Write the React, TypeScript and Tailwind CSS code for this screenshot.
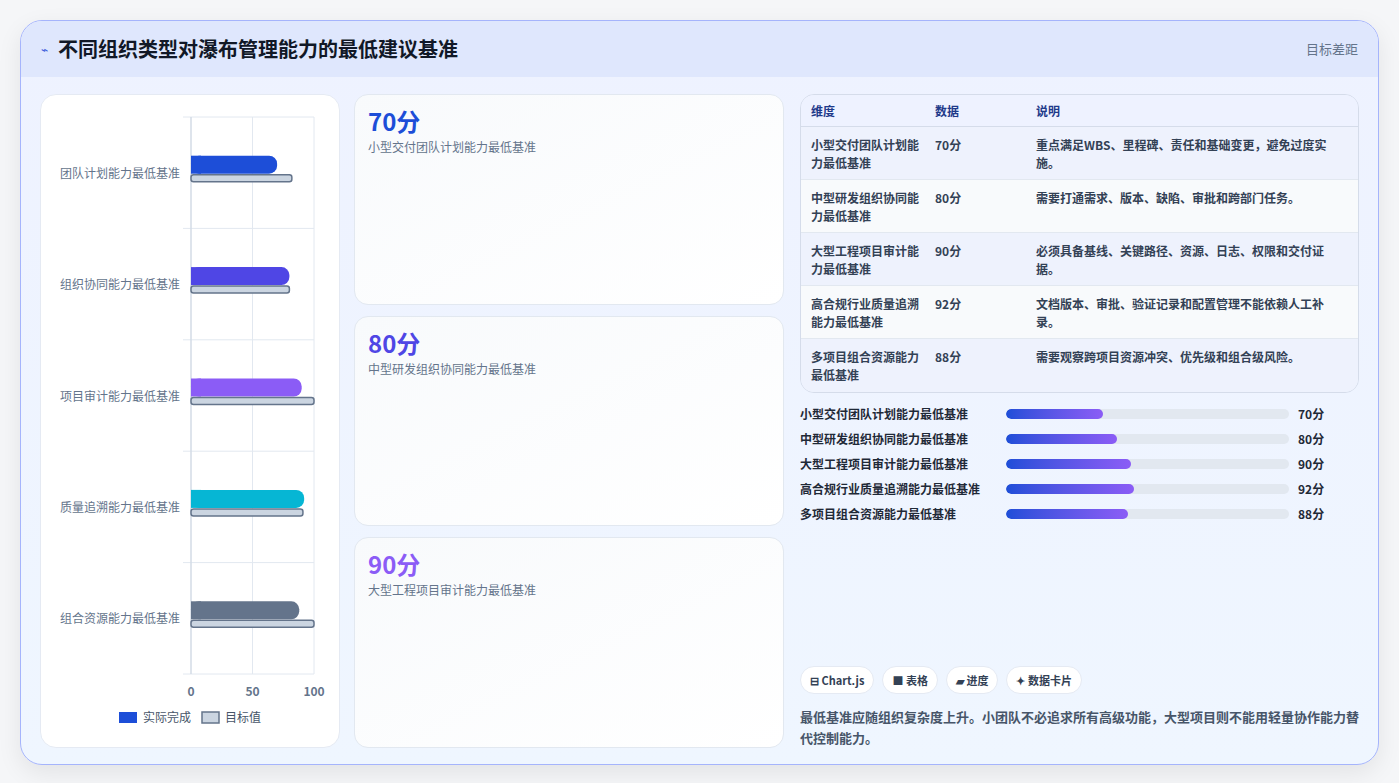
import React from "react";

const rows = [
  { name: "小型交付团队计划能力最低基准", short: "团队计划能力最低基准", v: 70, t: 82, c: "#1d4ed8", d: "重点满足WBS、里程碑、责任和基础变更，避免过度实施。" },
  { name: "中型研发组织协同能力最低基准", short: "组织协同能力最低基准", v: 80, t: 80, c: "#4f46e5", d: "需要打通需求、版本、缺陷、审批和跨部门任务。" },
  { name: "大型工程项目审计能力最低基准", short: "项目审计能力最低基准", v: 90, t: 100, c: "#8b5cf6", d: "必须具备基线、关键路径、资源、日志、权限和交付证据。" },
  { name: "高合规行业质量追溯能力最低基准", short: "质量追溯能力最低基准", v: 92, t: 91, c: "#06b6d4", d: "文档版本、审批、验证记录和配置管理不能依赖人工补录。" },
  { name: "多项目组合资源能力最低基准", short: "组合资源能力最低基准", v: 88, t: 100, c: "#64748b", d: "需要观察跨项目资源冲突、优先级和组合级风险。" },
];

const font = { fontFamily: '"Noto Sans CJK SC", "Noto Sans", sans-serif' };

function Chart() {
  const x0 = 150, w = 123, top = 22, rowH = 111.4;
  return (
    <svg width="299" height="652" className="block">
      {[0, 50, 100].map((t) => (
        <line key={t} x1={x0 + (w * t) / 100} x2={x0 + (w * t) / 100} y1={top} y2={top + rowH * 5} stroke="#e2e8f0" />
      ))}
      {[0, 1, 2, 3, 4, 5].map((i) => (
        <line key={i} x1={x0 - 8} x2={x0 + w} y1={top + rowH * i} y2={top + rowH * i} stroke="#e2e8f0" />
      ))}
      <line x1={x0} x2={x0} y1={top} y2={top + rowH * 5} stroke="#cbd5e1" />
      {rows.map((r, i) => {
        const cy = top + rowH * i + rowH / 2;
        return (
          <g key={i}>
            <text x={x0 - 11} y={cy + 5} textAnchor="end" fontSize="12" fill="#64748b" style={font}>{r.short}</text>
            <rect x={x0} y={cy - 17} width={(w * r.v) / 100} height={18} rx={8} fill={r.c} />
            <rect x={x0} y={cy - 17} width={10} height={18} fill={r.c} />
            <rect x={x0} y={cy + 2} width={(w * r.t) / 100} height={7} rx={2.5} fill="#cbd5e1" stroke="#64748b" strokeWidth="1.5" />
          </g>
        );
      })}
      {[0, 50, 100].map((t) => (
        <text key={t} x={x0 + (w * t) / 100} y={top + rowH * 5 + 22} textAnchor="middle" fontSize="12" fontWeight="700" fill="#64748b" style={font}>{t}</text>
      ))}
      <rect x="78" y="617" width="18" height="11" fill="#1d4ed8" />
      <text x="102" y="627" fontSize="12" fill="#475569" style={font}>实际完成</text>
      <rect x="161" y="617" width="17" height="11" fill="#cbd5e1" stroke="#64748b" strokeWidth="1.5" />
      <text x="184" y="627" fontSize="12" fill="#475569" style={font}>目标值</text>
    </svg>
  );
}

export default function App() {
  return (
    <div className="w-[1399px] h-[783px] bg-[#f5f6f8] p-[20px] pb-[18px]" style={font}>
      <div className="h-full rounded-[22px] border border-[#a5b4fc] bg-gradient-to-b from-[#eef2ff] to-[#eff6ff] overflow-hidden shadow-[0_8px_24px_rgba(0,0,0,0.08)] flex flex-col">
        <div className="h-[56px] shrink-0 bg-[#dfe7fd] flex items-center justify-between px-[20px]">
          <div className="flex items-center gap-[10px]">
            <span className="text-[#3b5bdb] text-[12px]">⌁</span>
            <h1 className="text-[20px] font-bold text-[#111827]">不同组织类型对瀑布管理能力的最低建议基准</h1>
          </div>
          <span className="text-[13px] text-[#64748b]">目标差距</span>
        </div>
        <div className="flex-1 flex gap-[14px] px-[19px] pt-[17px] pb-[19px]">
          <div className="w-[300px] shrink-0 bg-white rounded-[16px] border border-[#e5eaf3] overflow-hidden">
            <Chart />
          </div>
          <div className="w-[430px] shrink-0 flex flex-col gap-[11px]">
            {rows.slice(0, 3).map((r, i) => (
              <div key={i} className="flex-1 rounded-[14px] border border-[#e2e8f0] bg-gradient-to-br from-[#f8fafc] to-white px-[13px] pt-[10px]">
                <div className="text-[24px] font-bold leading-[32px]" style={{ color: r.c }}>{r.v}分</div>
                <div className="text-[12px] text-[#64748b] mt-[1px]">{r.name}</div>
              </div>
            ))}
          </div>
          <div className="flex-1 flex flex-col pl-[2px] pr-[0px]">
            <div className="rounded-[14px] border border-[#d5dcea] overflow-hidden text-[12px]">
              <div className="flex h-[32px] items-center bg-[#eef2ff] border-b border-[#d5dcea] text-[#1e3a8a] font-semibold">
                <div className="w-[134px] pl-[10px]">维度</div>
                <div className="w-[101px]">数据</div>
                <div className="flex-1">说明</div>
              </div>
              {rows.map((r, i) => (
                <div key={i} className={`flex h-[53px] pt-[9px] leading-[18px] text-[#334155] font-semibold ${i % 2 === 0 ? "bg-[#eef2fd]" : "bg-[#f8fafc]"} ${i < 4 ? "border-b border-[#e2e8f0]" : ""}`}>
                  <div className="w-[134px] pl-[10px] pr-[14px]">{r.name}</div>
                  <div className="w-[101px]">{r.v}分</div>
                  <div className="flex-1 pr-[14px]">{r.d}</div>
                </div>
              ))}
            </div>
            <div className="mt-[12px] flex flex-col gap-[7px]">
              {rows.map((r, i) => (
                <div key={i} className="flex items-center h-[18px] text-[12px] font-semibold text-[#1f2937]">
                  <div className="w-[206px]">{r.name}</div>
                  <div className="w-[283px] h-[10px] rounded-full bg-[#e2e8f0] overflow-hidden">
                    <div className="h-full rounded-full bg-gradient-to-r from-[#1d4ed8] to-[#8b5cf6]" style={{ width: `${r.v * 0.49}%` }} />
                  </div>
                  <div className="ml-[9px]">{r.v}分</div>
                </div>
              ))}
            </div>
            <div className="flex-1" />
            <div className="flex gap-[8px] text-[11px] font-semibold text-[#334155]">
              {["⊟ Chart.js", "■ 表格", "▰ 进度", "✦ 数据卡片"].map((t) => (
                <span key={t} className="rounded-full bg-white border border-[#e5eaf3] px-[9px] h-[28px] flex items-center">{t}</span>
              ))}
            </div>
            <p className="mt-[12px] text-[13px] leading-[21px] text-[#475569] font-semibold">最低基准应随组织复杂度上升。小团队不必追求所有高级功能，大型项目则不能用轻量协作能力替代控制能力。</p>
          </div>
        </div>
      </div>
    </div>
  );
}
